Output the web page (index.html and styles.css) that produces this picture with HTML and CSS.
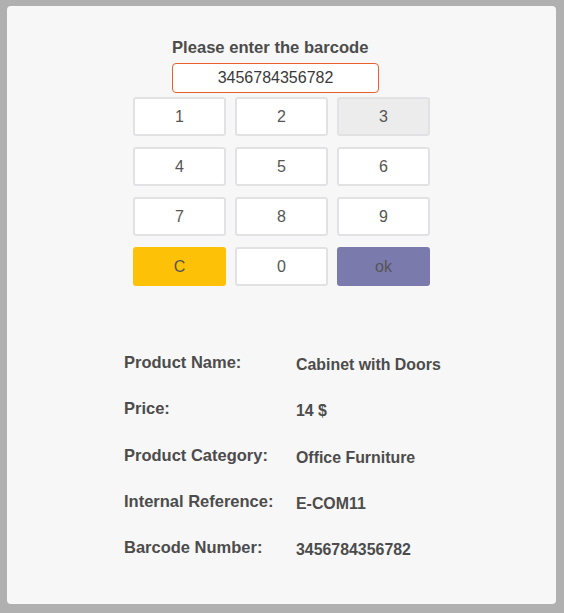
FILE: index.html
```html
<!DOCTYPE html>
<html>
<head>
<meta charset="utf-8">
<link rel="stylesheet" href="styles.css">
</head>
<body>
<div class="card">
  <div class="entry">
    <div class="title">Please enter the barcode</div>
    <div class="barcode-input">3456784356782</div>
  </div>
  <div class="keypad">
    <div class="key">1</div>
    <div class="key">2</div>
    <div class="key key-active">3</div>
    <div class="key">4</div>
    <div class="key">5</div>
    <div class="key">6</div>
    <div class="key">7</div>
    <div class="key">8</div>
    <div class="key">9</div>
    <div class="key key-clear">C</div>
    <div class="key">0</div>
    <div class="key key-ok">ok</div>
  </div>
  <div class="info">
    <div class="label">Product Name:</div><div class="value">Cabinet with Doors</div>
    <div class="label">Price:</div><div class="value">14 $</div>
    <div class="label">Product Category:</div><div class="value">Office Furniture</div>
    <div class="label">Internal Reference:</div><div class="value">E-COM11</div>
    <div class="label">Barcode Number:</div><div class="value">3456784356782</div>
  </div>
</div>
</body>
</html>
```
FILE: styles.css
```css
html, body {
  margin: 0;
  height: 100%;
}
body {
  background: #b0b0b0;
  padding: 6px 8px 9px 7px;
  box-sizing: border-box;
  font-family: "Liberation Sans", Arial, sans-serif;
  color: #4c4c4c;
}
.card {
  background: #f7f7f7;
  border-radius: 4px;
  height: 598px;
  box-sizing: border-box;
  padding-top: 32px;
}
.entry {
  padding-left: 165px;
  display: flex;
  flex-direction: column;
  align-items: flex-start;
}
.title {
  font-size: 16.6px;
  font-weight: bold;
  line-height: 20px;
  height: 20px;
}
.barcode-input {
  margin-top: 5px;
  width: 207px;
  height: 30px;
  box-sizing: border-box;
  border: 1px solid #e8602c;
  border-radius: 4px;
  background: #fff;
  text-align: center;
  font-size: 16px;
  line-height: 28px;
  color: #3a3a3a;
}
.keypad {
  margin: 4px 0 0 126px;
  display: grid;
  grid-template-columns: repeat(3, 93px);
  grid-auto-rows: 39px;
  column-gap: 9px;
  row-gap: 11px;
}
.key {
  background: #fff;
  border: 2px solid #e2e2e4;
  border-radius: 3px;
  box-sizing: border-box;
  display: flex;
  align-items: center;
  justify-content: center;
  font-size: 16px;
  color: #555;
}
.key-active {
  background: #ececec;
}
.key-clear {
  background: #fdc107;
  border-color: #fdc107;
}
.key-ok {
  background: #7b7aad;
  border-color: #7b7aad;
}
.info {
  margin: 67px 0 0 117px;
  display: grid;
  grid-template-columns: 172px auto;
  grid-auto-rows: 46.3px;
  font-weight: bold;
}
.label {
  font-size: 16.5px;
  line-height: 19px;
}
.value {
  font-size: 15.9px;
  line-height: 19px;
  padding-top: 2px;
}
```
